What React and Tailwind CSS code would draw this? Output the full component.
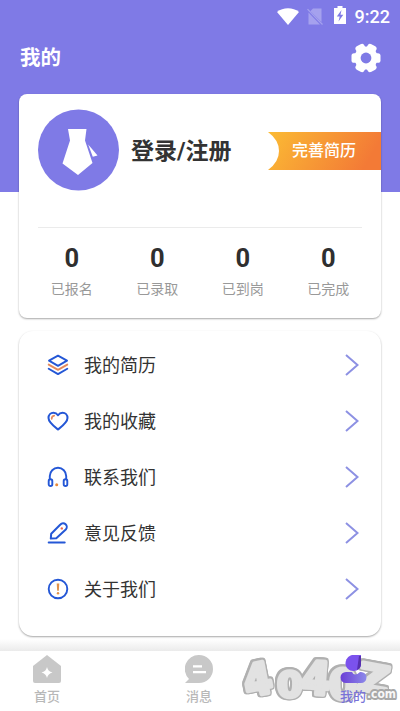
const stats = ['已报名', '已录取', '已到岗', '已完成'];

const menu = [
  { label: '我的简历', icon: LayersIcon },
  { label: '我的收藏', icon: HeartIcon },
  { label: '联系我们', icon: HeadsetIcon },
  { label: '意见反馈', icon: PenIcon },
  { label: '关于我们', icon: AboutIcon },
];

function LayersIcon() {
  return (
    <svg viewBox="0 0 22 22" className="h-[22px] w-[22px]" fill="none" stroke="#2457d6" strokeWidth="1.9" strokeLinejoin="round" strokeLinecap="round">
      <path d="M11 1.6 20 6.7 11 11.8 2 6.7Z" />
      <path d="M1.7 10.6 11 15.8l9.3-5.2" stroke="#e58a5c" />
      <path d="M1.7 14.7 11 20.1l9.3-5.4" />
    </svg>
  );
}

function HeartIcon() {
  return (
    <svg viewBox="0 0 22 22" className="h-[22px] w-[22px]" fill="none" stroke="#2457d6" strokeWidth="2" strokeLinejoin="round" strokeLinecap="round">
      <path d="M11 19.5C7.5 16.8 1.5 12.4 1.5 8 1.5 4.8 3.7 2.7 6.4 2.7c2 0 3.6 1 4.6 2.5 1-1.5 2.6-2.5 4.6-2.5 2.7 0 4.9 2.1 4.9 5.3 0 4.4-6 8.8-9.5 11.5Z" />
      <path d="M4.7 8.8c0-1.8 1-2.9 2.5-3.2" stroke="#e58a5c" strokeWidth="1.7" />
    </svg>
  );
}

function HeadsetIcon() {
  return (
    <svg viewBox="0 0 22 22" className="h-[22px] w-[22px]" fill="none" stroke="#2457d6" strokeWidth="1.9">
      <path d="M2.8 14V10a8.2 8.2 0 0 1 16.4 0v4" />
      <rect x="1.7" y="13.2" width="3.6" height="6.8" rx="1.8" />
      <rect x="16.7" y="13.2" width="3.6" height="6.8" rx="1.8" />
      <circle cx="9.7" cy="18.8" r="1.5" fill="#ea8b3a" stroke="none" />
    </svg>
  );
}

function PenIcon() {
  return (
    <svg viewBox="0 0 22 22" className="h-[22px] w-[22px]" fill="none" stroke="#2457d6" strokeWidth="2" strokeLinejoin="round" strokeLinecap="round">
      <path d="M3.8 16.6 4.200 11.700 13.400 2.500a3.500 3.500 0 0 1 5.400 5L9.300 16.300Z" />
      <path d="M1.7 20.4h16" />
      <circle cx="14.800" cy="6.400" r="1.200" fill="#f0664a" stroke="none" />
    </svg>
  );
}

function AboutIcon() {
  return (
    <svg viewBox="0 0 22 22" className="h-[22px] w-[22px]" fill="none" stroke="#2457d6" strokeWidth="1.9">
      <circle cx="11" cy="11" r="9.3" />
      <path d="M9.7 5.5h2.6l-.5 7.2h-1.6Z" fill="#e2924a" stroke="none" />
      <circle cx="11" cy="15.3" r="1.2" fill="#e2924a" stroke="none" />
    </svg>
  );
}

function StatusBar() {
  return (
    <div className="flex h-8 items-center justify-end pr-[10px] text-white">
      <svg viewBox="0 0 22 17" className="mr-[8px] h-[17px] w-[22px]" fill="currentColor">
        <path d="M0 4C6-1 16-1 22 4L11 17Z" />
      </svg>
      <svg viewBox="0 0 16 17" className="mr-[11px] h-[17px] w-4">
        <path d="M6 .5h8.500V14L3.300 3.200Z" fill="#a5a1ee" />
        <path d="M1.500 4.500 13 16.500H1.500Z" fill="#a5a1ee" />
        <path d="M.5 1.200 15.500 16.500" stroke="#a5a1ee" strokeWidth="1.200" />
      </svg>
      <svg viewBox="0 0 12 18" className="-mt-[3px] mr-[9px] h-[18px] w-3">
        <path d="M3.500 0h5v2H12v16H0V2h3.500Z" fill="#fff" />
        <path d="M7.500 4 2.800 10.500h2.900L4.500 15.500l4.800-6.700H6.500Z" fill="#7f7ae6" />
      </svg>
      <span className="pt-px font-['Roboto',sans-serif] text-[18px] font-medium leading-none">9:22</span>
    </div>
  );
}

function GearIcon() {
  return (
    <svg viewBox="0 0 30 30" className="h-[30px] w-[30px]">
      <g fill="#fff">
        <circle cx="15" cy="15" r="11.6" />
        <rect x=".5" y="10.200" width="29" height="9.600" rx="2.600" />
        <rect x=".3" y="10.200" width="29.400" height="9.600" rx="2.600" transform="rotate(60 15 15)" />
        <rect x=".3" y="10.200" width="29.400" height="9.600" rx="2.600" transform="rotate(120 15 15)" />
      </g>
      <circle cx="15" cy="15" r="5.400" fill="#7f7ae6" />
    </svg>
  );
}

function Avatar() {
  return (
    <svg viewBox="0 0 82 82" className="-mt-[2px] h-[82px] w-[82px] shrink-0">
      <circle cx="41.500" cy="41" r="40.500" fill="#7f7ae6" />
      <path d="M31 20h18.500L48 31.500 55.500 54 41 66 25.500 54.500 33 31.500Z" fill="#fff" />
      <path d="M51.200 35.500 60.500 46.500 55.800 47.800Z" fill="#fff" />
    </svg>
  );
}

function ProfileCard() {
  return (
    <section className="h-[224px] rounded-[8px] bg-white pt-4 shadow-[0_1px_2px_rgba(0,0,0,0.35)]">
      <div className="flex h-[82px] items-center pl-[18px]">
        <Avatar />
        <h2 className="ml-[12px] text-[23px] font-bold leading-none text-[#333]">登录/注册</h2>
        <div className="relative ml-auto h-[38px] w-[113px]">
          <svg viewBox="0 0 113 38" className="absolute inset-0 h-full w-full">
            <defs>
              <linearGradient id="ribbon" x1="0" x2="1" y1="0" y2="0.2">
                <stop offset="0" stopColor="#fbbb34" />
                <stop offset="1" stopColor="#f37a36" />
              </linearGradient>
            </defs>
            <path d="M0 0H113V38H0Q11 30 11 19T0 0Z" fill="url(#ribbon)" />
          </svg>
          <span className="relative block pl-[24px] text-[16px] font-medium leading-[38px] text-white">完善简历</span>
        </div>
      </div>
      <div className="mx-[19px] mt-[35px] h-px bg-[#ebebeb]" />
      <div className="mx-[10px] grid grid-cols-4 pt-[17px] text-center">
        {stats.map((label) => (
          <div key={label}>
            <div className="font-['Roboto',sans-serif] text-[25.5px] font-bold leading-[27px] text-[#2f2f2f]">0</div>
            <div className="mt-[7px] text-[14px] leading-5 text-[#999]">{label}</div>
          </div>
        ))}
      </div>
    </section>
  );
}

function MenuCard() {
  return (
    <section className="mt-[13px] h-[305px] rounded-[14px] bg-white pt-[6px] shadow-[0_1px_2px_rgba(0,0,0,0.35)]">
      {menu.map(({ label, icon: Icon }) => (
        <div key={label} className="flex h-14 items-center pl-7 pr-[22px]">
          <Icon />
          <span className="ml-[15px] pt-[2px] text-[18px] leading-none text-[#333]">{label}</span>
          <svg viewBox="0 0 14 22" className="ml-auto h-[22px] w-[14px]" fill="none" stroke="#8d91e3" strokeWidth="2">
            <path d="M1 1 12.500 11 1 21" />
          </svg>
        </div>
      ))}
    </section>
  );
}

// site stamp laid over the tab bar
function Stamp() {
  return (
    <svg viewBox="0 0 170 60" className="absolute bottom-0 right-0 h-[60px] w-[170px] overflow-visible">
      <g
        className="font-['DejaVu_Sans',sans-serif] font-bold [filter:drop-shadow(1.5px_0_0_#b0b0b0)_drop-shadow(-1.5px_0_0_#b0b0b0)_drop-shadow(0_1.5px_0_#b0b0b0)_drop-shadow(0_-1.5px_0_#b0b0b0)]"
        fontSize="40"
        fill="#e2e2e2"
        stroke="#e2e2e2"
        strokeWidth="4"
        strokeLinejoin="round"
      >
        <text transform="translate(17 46) rotate(-11) scale(1 1.080)">4</text>
        <text transform="translate(47 46) scale(.92 .88)">0</text>
        <text transform="translate(71 42) rotate(4) scale(1.020 1.120)">4</text>
        <text transform="translate(99 48) scale(1 1.020)">0</text>
        <text transform="translate(126 38) rotate(10) scale(1.080 .940)">Z</text>
      </g>
      <text
        x="137"
        y="47"
        className="font-['DejaVu_Sans',sans-serif] font-bold"
        fontSize="12.500"
        textLength="29"
        lengthAdjust="spacingAndGlyphs"
        fill="#f7f7f7"
        stroke="#a8a8a8"
        strokeWidth="4"
        paintOrder="stroke"
        strokeLinejoin="round"
      >
        .com
      </text>
    </svg>
  );
}

function TabBar() {
  return (
    <nav className="relative flex h-[60px] justify-between bg-white pl-[27px] pr-[27px] pt-1 text-[13px] font-medium leading-none text-[#b8b8b8]">
      <Stamp />
      <div className="flex w-10 flex-col items-center">
        <svg viewBox="0 0 28 28" className="h-7 w-7">
          <path d="M14 0 28 11v15a2 2 0 0 1-2 2H2a2 2 0 0 1-2-2V11Z" fill="#c8c8c8" />
          <path d="M14 12Q15 16.500 19.500 17.500 15 18.500 14 23 13 18.500 8.500 17.500 13 16.500 14 12Z" fill="#fff" />
        </svg>
        <span className="mt-[7px]">首页</span>
      </div>
      <div className="-ml-[2px] flex w-10 flex-col items-center">
        <svg viewBox="0 0 28 28" className="h-7 w-7">
          <path d="M14 0a14 14 0 1 1 0 28H0l4-4A14 14 0 0 1 14 0Z" fill="#c8c8c8" />
          <path d="M8 11.300h9M8 17.200h13" stroke="#fff" strokeWidth="2.200" />
        </svg>
        <span className="mt-[7px]">消息</span>
      </div>
      <div className="relative flex w-10 flex-col items-center text-[#7973d8]">
        <svg viewBox="0 0 28 28" className="h-7 w-7">
          <defs>
            <linearGradient id="body" x1="0" x2="1" y1="0" y2="0">
              <stop offset="0" stopColor="#6b3fd6" />
              <stop offset="1" stopColor="#8d8ae9" />
            </linearGradient>
          </defs>
          <path d="M13 0h9v9c0 4-3 7-7.500 7S6.500 12.500 6.500 8.500 9 1 13 0Z" fill="#7b52ed" />
          <path d="M20 1h2v8c0 3-1.500 5-4 6Z" fill="#5630ae" />
          <path d="M7 17h6q2.500 5 8 0h1a5.500 5.500 0 0 1 0 11H7A5.500 5.500 0 0 1 7 17Z" fill="url(#body)" />
        </svg>
        <span className="mt-[7px]">我的</span>
      </div>
    </nav>
  );
}

export default function App() {
  return (
    <div className="flex h-[711px] w-[400px] flex-col overflow-hidden bg-white font-['Roboto','Noto_Sans_CJK_SC',sans-serif]">
      <header className="h-[192px] shrink-0 bg-[#7f7ae6]">
        <StatusBar />
        <div className="flex h-[51px] items-center justify-between pl-5 pr-[19px]">
          <h1 className="pt-[2px] text-[20.5px] font-bold leading-none text-white">我的</h1>
          <GearIcon />
        </div>
      </header>
      <main className="-mt-[98px] px-[19px]">
        <ProfileCard />
        <MenuCard />
      </main>
      <div className="mt-auto h-3 bg-gradient-to-b from-white to-[#ebebeb]" />
      <TabBar />
    </div>
  );
}
